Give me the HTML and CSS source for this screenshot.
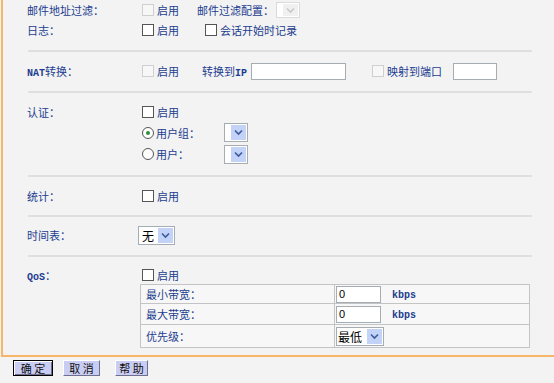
FILE: index.html
```html
<!DOCTYPE html>
<html lang="zh-CN">
<head>
  <meta charset="UTF-8" />
  <title>过滤设置</title>
  <link rel="stylesheet" href="styles.css">
</head>
<body>
  <div class="panel">
    <div class="section sec-first">
      <div class="row">
        <div class="label">邮件地址过滤：</div>
        <div class="ctrl">
          <span class="cb off"></span><span class="txt">启用</span>
          <span class="txt mail-cfg">邮件过滤配置：</span>
          <span class="sel small off"><span class="arrow"><svg width="9" height="7" viewBox="0 0 9 7"><path d="M1 1.5 L4.5 5 L8 1.5" fill="none" stroke="#c8c8c8" stroke-width="1.6"/></svg></span></span>
        </div>
      </div>
      <div class="row">
        <div class="label">日志：</div>
        <div class="ctrl">
          <span class="cb"></span><span class="txt">启用</span>
          <span class="cb log-cb"></span><span class="txt">会话开始时记录</span>
        </div>
      </div>
    </div>
    <div class="sep"></div>

    <div class="section sec-nat">
      <div class="row">
        <div class="label"><span class="mono">NAT</span>转换：</div>
        <div class="ctrl">
          <span class="cb off"></span><span class="txt">启用</span>
          <span class="txt nat-to">转换到<span class="mono">IP</span></span>
          <span class="input ip"></span>
          <span class="cb off port-cb"></span><span class="txt">映射到端口</span>
          <span class="input port"></span>
        </div>
      </div>
    </div>
    <div class="sep"></div>

    <div class="section sec-auth">
      <div class="row">
        <div class="label">认证：</div>
        <div class="ctrl"><span class="cb"></span><span class="txt">启用</span></div>
      </div>
      <div class="row row-sel">
        <div class="label"></div>
        <div class="ctrl">
          <span class="radio checked"></span><span class="txt radio-txt">用户组：</span>
          <span class="sel small"><span class="arrow"><svg width="9" height="7" viewBox="0 0 9 7"><path d="M1 1.5 L4.5 5 L8 1.5" fill="none" stroke="#3d5a9c" stroke-width="1.6"/></svg></span></span>
        </div>
      </div>
      <div class="row row-sel2">
        <div class="label"></div>
        <div class="ctrl">
          <span class="radio"></span><span class="txt radio-txt">用户：</span>
          <span class="sel small"><span class="arrow"><svg width="9" height="7" viewBox="0 0 9 7"><path d="M1 1.5 L4.5 5 L8 1.5" fill="none" stroke="#3d5a9c" stroke-width="1.6"/></svg></span></span>
        </div>
      </div>
    </div>
    <div class="sep"></div>

    <div class="section sec-stat">
      <div class="row">
        <div class="label">统计：</div>
        <div class="ctrl"><span class="cb"></span><span class="txt">启用</span></div>
      </div>
    </div>
    <div class="sep"></div>

    <div class="section sec-time">
      <div class="row">
        <div class="label">时间表：</div>
        <div class="ctrl">
          <span class="sel time-sel"><span class="val">无</span><span class="arrow"><svg width="9" height="7" viewBox="0 0 9 7"><path d="M1 1.5 L4.5 5 L8 1.5" fill="none" stroke="#3d5a9c" stroke-width="1.6"/></svg></span></span>
        </div>
      </div>
    </div>
    <div class="sep"></div>

    <div class="section sec-qos">
      <div class="row">
        <div class="label"><span class="mono">QoS</span>：</div>
        <div class="ctrl"><span class="cb"></span><span class="txt">启用</span></div>
      </div>
      <table class="qos">
        <tr class="r1">
          <td class="name">最小带宽：</td>
          <td class="val"><span class="input num">0</span><span class="unit">kbps</span></td>
        </tr>
        <tr class="r2">
          <td class="name">最大带宽：</td>
          <td class="val"><span class="input num">0</span><span class="unit">kbps</span></td>
        </tr>
        <tr class="r3">
          <td class="name">优先级：</td>
          <td class="val">
            <span class="sel prio-sel"><span class="val">最低</span><span class="arrow"><svg width="9" height="7" viewBox="0 0 9 7"><path d="M1 1.5 L4.5 5 L8 1.5" fill="none" stroke="#3d5a9c" stroke-width="1.6"/></svg></span></span>
          </td>
        </tr>
      </table>
    </div>
  </div>

  <div class="buttons">
    <button class="btn default">确 定</button>
    <button class="btn cancel">取 消</button>
    <button class="btn help">帮 助</button>
  </div>
</body>
</html>
```

FILE: styles.css
```css
body {
  margin: 0;
  background: #f3f3f3;
  color: #1d3d8f;
  font-family: "Noto Sans CJK SC", "Liberation Sans", sans-serif;
  font-size: 11px;
  width: 554px;
  height: 383px;
  overflow: hidden;
}

.panel {
  margin-left: 1px;
  height: 357px;
  box-sizing: border-box;
  padding-left: 24px;
  border-left: 2px solid #f7b56a;
  border-bottom: 2px solid #f7b56a;
}

.mono {
  font-family: "Liberation Mono", monospace;
  font-size: 10px;
  font-weight: bold;
}

.row {
  display: grid;
  grid-template-columns: 111px 1fr;
  height: 20px;
  align-items: center;
}

.label {
  white-space: nowrap;
}

.ctrl {
  display: flex;
  align-items: center;
  white-space: nowrap;
}

.sep {
  margin-left: 1px;
  width: 504px;
  height: 2px;
  border-radius: 1px;
  background: #dedede;
}

/* vertical rhythm of the sections */
.sec-first { padding-bottom: 10px; }
.sec-nat { padding: 9px 0 10px; }
.sec-auth { padding: 9px 0 10px; }
.sec-auth .row-sel { height: 21px; }
.sec-auth .row-sel2 { height: 22px; }
.sec-stat { padding: 9px 0 9px; }
.sec-time { padding: 8px 0 10px; }
.sec-qos { padding-top: 8px; }
.sec-qos .row { height: 19px; }

/* checkboxes and radios */
.cb {
  display: inline-block;
  width: 10px;
  height: 10px;
  margin: 0 3px 0 4px;
  border: 1px solid #555;
  background: #fff;
}

.cb.off {
  border-color: #cfcfcf;
  background: #f7f7f7;
}

.log-cb { margin-left: 26px; }
.port-cb { margin-left: 26px; }

.radio {
  display: inline-block;
  box-sizing: border-box;
  width: 12px;
  height: 12px;
  margin: 0 2px 0 4px;
  border: 1px solid #555;
  border-radius: 50%;
  background: #fff;
  position: relative;
}

.radio.checked::after {
  content: "";
  position: absolute;
  left: 3px;
  top: 3px;
  width: 4px;
  height: 4px;
  border-radius: 50%;
  background: #2f8f3a;
}

.radio-txt { width: 68px; }

.mail-cfg { margin-left: 18px; }
.nat-to { margin-left: 23px; }

/* text inputs */
.input {
  display: inline-block;
  box-sizing: border-box;
  height: 17px;
  border: 1px solid #a5acb2;
  background: #fff;
}

.ip { width: 95px; margin-left: 4px; }
.port { width: 44px; margin-left: 11px; }

.num {
  width: 45px;
  padding-left: 2px;
  color: #000;
  line-height: 15px;
  font-family: "Liberation Sans", sans-serif;
}

/* selects */
.sel {
  display: inline-flex;
  box-sizing: border-box;
  height: 19px;
  border: 1px solid #a5acb2;
  background: #fff;
  justify-content: flex-end;
  align-items: stretch;
}

.sel .val {
  flex: 1;
  padding-left: 3px;
  color: #000;
  font-size: 12px;
  line-height: 17px;
}

.sel .arrow {
  width: 15px;
  margin: 1px;
  background: #c3d3f7;
  display: flex;
  align-items: center;
  justify-content: center;
}

.small { width: 24px; }
.sel.off { border-color: #dadada; height: 16px; margin-left: 2px; }
.sel.off .arrow { background: #f0f0f0; }
.time-sel { width: 37px; }
.prio-sel { width: 48px; height: 19px; }

/* qos table */
.qos {
  margin-left: 113px;
  width: 390px;
  border-collapse: collapse;
  border: 1px solid #b0b0b0;
  background: #f7f7f7;
}

.qos td {
  padding: 0;
  border: 1px solid #c4c4c4;
}

.qos .name {
  width: 188px;
  padding-left: 5px;
}

.qos .val {
  padding-left: 1px;
  white-space: nowrap;
}

.qos .r1 { height: 19px; }
.qos .r2 { height: 21px; }
.qos .r3 { height: 23px; }

.unit {
  margin-left: 11px;
  font-family: "Liberation Mono", monospace;
  font-size: 10px;
  font-weight: bold;
}

/* bottom buttons */
.buttons {
  display: flex;
  padding: 3px 0 0 13px;
}

.btn {
  box-sizing: border-box;
  height: 16px;
  padding: 0;
  font-family: "Noto Sans CJK SC", sans-serif;
  font-size: 11px;
  line-height: 12px;
  color: #111;
  background: #c9cdf4;
  border: 1px solid;
  border-color: #fff #6e6e8e #6e6e8e #fff;
}

.btn.default {
  width: 40px;
  border: 1px solid #000;
  box-shadow: inset 1px 1px 0 #fff, inset -1px -1px 0 #6e6e8e;
}

.cancel { width: 37px; margin-left: 10px; }
.help { width: 33px; margin-left: 15px; }
```
